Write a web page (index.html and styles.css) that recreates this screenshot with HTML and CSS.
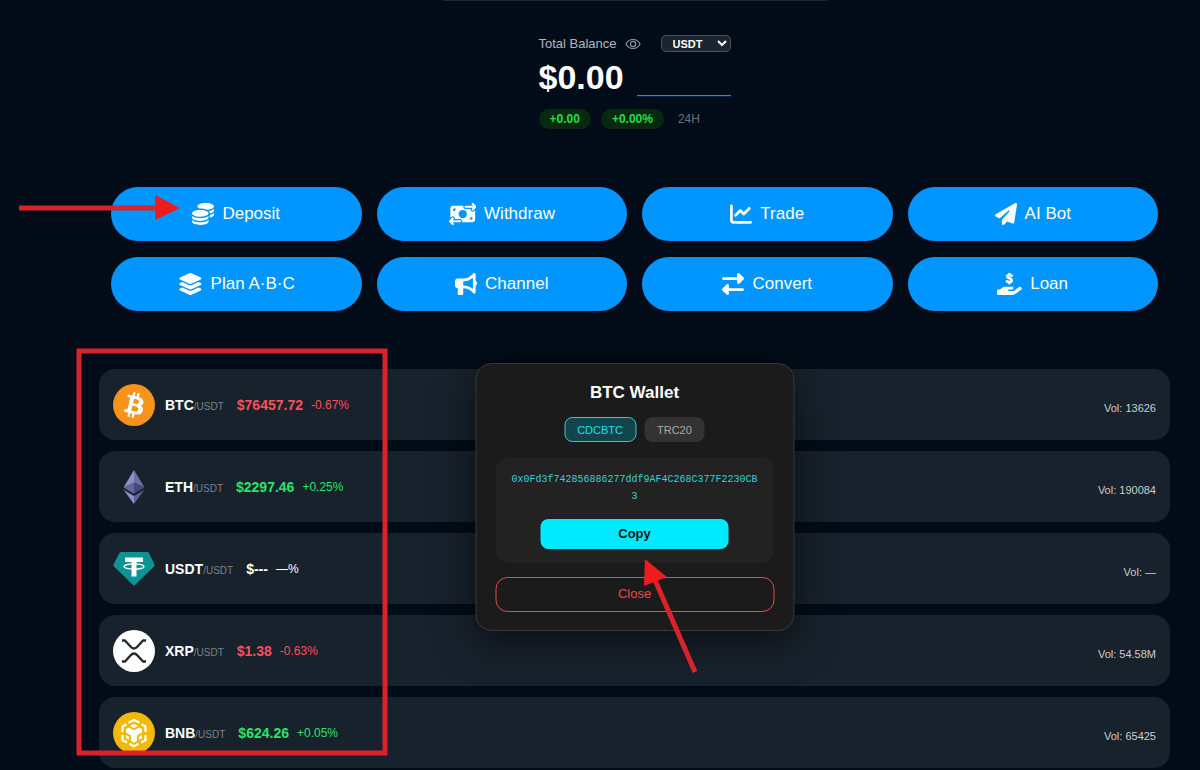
FILE: index.html
```html
<!DOCTYPE html>
<html lang="en">
    <head>
        <meta charset="utf-8">
        <title>Wallet</title>
        <link rel="stylesheet" href="styles.css">
    </head>
    <body>
        <main>
            <div class="topbar"></div>
            <section class="balance">
                <div class="balance-head">
                    <label for="currency">Total Balance</label>
                    <button class="eye" aria-label="Hide balance">
                        <svg viewBox="0 0 16 12"><path d="M1 6C4 0 12 0 15 6C12 12 4 12 1 6Z"/><circle cx="8" cy="6" r="2.6"/></svg>
                    </button>
                    <select id="currency">
                        <option>USDT</option>
                        <option>BTC</option>
                    </select>
                </div>
                <div class="balance-sum">
                    <strong>$0.00</strong>
                    <div class="spark"></div>
                </div>
                <div class="balance-change">
                    <span class="pill">+0.00</span>
                    <span class="pill">+0.00%</span>
                    <span class="period">24H</span>
                </div>
            </section>

            <nav class="actions">
                <button>
                    <svg viewBox="0 0 512 512"><path d="M512 80c0 18-14.3 34.6-38.4 48c-29.1 16.1-72.5 27.5-122.3 30.9c-3.7-1.8-7.4-3.5-11.3-5C300.6 137.4 248.2 128 192 128c-8.3 0-16.4 .2-24.5 .6l-1.1-.6C142.3 114.6 128 98 128 80c0-44.2 86-80 192-80S512 35.8 512 80zM160.7 161.1c10.2-.7 20.7-1.1 31.3-1.1c62.2 0 117.4 12.3 152.5 31.4C369.3 204.9 384 221.7 384 240c0 4-.7 7.9-2.1 11.7c-4.6 13.2-17 25.3-35 35.5c-.4 .2-.9 .5-1.3 .7c-35 19.4-90.8 32-153.6 32c-59.6 0-112.9-11.3-148.2-29.1c-1.9-.9-3.7-1.9-5.5-2.9C14.3 274.6 0 258 0 240c0-34.8 53.4-64.5 128-75.4c10.5-1.5 21.4-2.7 32.7-3.5zM416 240c0-21.9-10.6-39.9-24.1-53.4c28.3-4.4 54.2-11.4 76.2-20.5c16.3-6.8 31.5-15.2 43.9-25.5V176c0 19.3-16.5 37.1-43.8 50.9c-14.6 7.4-32.4 13.7-52.4 18.5c.1-1.8 .2-3.5 .2-5.3zm-32 96c0 18-14.3 34.6-38.4 48c-1.8 1-3.6 1.9-5.5 2.9C304.9 404.7 251.6 416 192 416c-62.8 0-118.6-12.6-153.6-32C14.3 370.6 0 354 0 336V300.6c12.5 10.3 27.6 18.7 43.9 25.5C83.4 342.6 135.8 352 192 352s108.6-9.4 148.1-25.9c7.8-3.2 15.3-6.9 22.4-10.9c6.1-3.4 11.8-7.2 17.2-11.2c1.5-1.1 2.9-2.3 4.3-3.4V336zm32 0V278.1c19-4.2 36.5-9.5 52.1-16c16.3-6.8 31.5-15.2 43.9-25.5V272c0 10.5-5 21-14.9 30.9c-16.3 16.3-45 29.7-81.3 38.4c.1-1.7 .2-3.5 .2-5.3zM192 448c56.2 0 108.6-9.4 148.1-25.9c16.3-6.8 31.5-15.2 43.9-25.5V432c0 44.2-86 80-192 80S0 476.2 0 432V396.6c12.5 10.3 27.6 18.7 43.9 25.5C83.4 438.6 135.8 448 192 448z"/></svg>
                    Deposit
                </button>
                <button>
                    <svg viewBox="0 0 640 512"><path d="M535 41c-9.4-9.4-9.4-24.6 0-33.9s24.6-9.4 33.9 0l64 64c4.5 4.5 7 10.6 7 17s-2.5 12.5-7 17l-64 64c-9.4 9.4-24.6 9.4-33.9 0s-9.4-24.6 0-33.9l23-23L384 112c-13.3 0-24-10.7-24-24s10.7-24 24-24l174.1 0L535 41zM105 377l-23 23L256 400c13.3 0 24 10.7 24 24s-10.7 24-24 24L81.9 448l23 23c9.4 9.4 9.4 24.6 0 33.9s-24.6 9.4-33.9 0L7 441c-4.5-4.5-7-10.6-7-17s2.5-12.5 7-17l64-64c9.4-9.4 24.6-9.4 33.9 0s9.4 24.6 0 33.9zM96 64H337.9c-3.7 7.2-5.9 15.3-5.9 24c0 28.7 23.3 52 52 52l117.4 0c-4 17 .6 35.5 13.8 48.8c20.3 20.3 53.2 20.3 73.5 0L608 169.5V384c0 35.3-28.7 64-64 64H302.1c3.7-7.2 5.9-15.3 5.9-24c0-28.7-23.3-52-52-52l-117.4 0c4-17-.6-35.5-13.8-48.8c-20.3-20.3-53.2-20.3-73.5 0L32 342.5V128c0-35.3 28.7-64 64-64zm64 64H96v64c35.3 0 64-28.7 64-64zM544 320c-35.3 0-64 28.7-64 64h64V320zM320 352a96 96 0 1 0 0-192 96 96 0 1 0 0 192z"/></svg>
                    Withdraw
                </button>
                <button>
                    <svg viewBox="0 0 512 512"><path d="M64 64c0-17.7-14.3-32-32-32S0 46.3 0 64V400c0 44.2 35.8 80 80 80H480c17.7 0 32-14.3 32-32s-14.3-32-32-32H80c-8.8 0-16-7.2-16-16V64zm406.6 86.6c12.5-12.5 12.5-32.8 0-45.3s-32.8-12.5-45.3 0L320 210.7l-57.4-57.4c-12.5-12.5-32.8-12.5-45.3 0l-112 112c-12.5 12.5-12.5 32.8 0 45.3s32.8 12.5 45.3 0L240 221.3l57.4 57.4c12.5 12.5 32.8 12.5 45.3 0l128-128z"/></svg>
                    Trade
                </button>
                <button>
                    <svg viewBox="0 0 512 512"><path d="M498.1 5.6c10.1 7 15.4 19.1 13.5 31.2l-64 416c-1.5 9.7-7.4 18.2-16 23s-18.9 5.4-28 1.6L284 427.7l-68.5 74.1c-8.9 9.7-22.9 12.9-35.2 8.1S160 493.2 160 480V396.4c0-4 1.5-7.8 4.2-10.7L331.8 202.8c5.8-6.3 5.6-16-.4-22s-15.7-6.4-22-.7L106 360.8 17.7 316.6C7.1 311.3 .3 300.7 0 288.9s5.9-22.8 16.1-28.7l448-256c10.7-6.1 23.9-5.5 34 1.4z"/></svg>
                    AI Bot
                </button>
                <button>
                    <svg viewBox="0 0 576 512"><path d="M264.5 5.2c14.9-6.9 32.1-6.9 47 0l218.6 101c8.5 3.9 13.9 12.4 13.9 21.8s-5.4 17.9-13.9 21.8l-218.6 101c-14.9 6.9-32.1 6.9-47 0L45.9 149.8C37.4 145.8 32 137.3 32 128s5.4-17.9 13.9-21.8L264.5 5.2zM476.9 209.6l53.2 24.6c8.5 3.9 13.9 12.4 13.9 21.8s-5.4 17.9-13.9 21.8l-218.6 101c-14.9 6.9-32.1 6.9-47 0L45.9 277.8C37.4 273.8 32 265.3 32 256s5.4-17.9 13.9-21.8l53.2-24.6 152 70.2c23.4 10.8 50.4 10.8 73.8 0l152-70.2zm-152 198.2l152-70.2 53.2 24.6c8.5 3.9 13.9 12.4 13.9 21.8s-5.4 17.9-13.9 21.8l-218.6 101c-14.9 6.9-32.1 6.9-47 0L45.9 405.8C37.4 401.8 32 393.3 32 384s5.4-17.9 13.9-21.8l53.2-24.6 152 70.2c23.4 10.8 50.4 10.8 73.8 0z"/></svg>
                    Plan A·B·C
                </button>
                <button>
                    <svg viewBox="0 0 512 512"><path d="M480 32c0-12.9-7.8-24.6-19.8-29.6s-25.7-2.2-34.9 6.9L381.7 53c-48 48-113.1 75-181 75H192 160 64c-35.3 0-64 28.7-64 64v96c0 35.3 28.7 64 64 64l0 128c0 17.7 14.3 32 32 32h64c17.7 0 32-14.3 32-32V352l8.7 0c67.9 0 133 27 181 75l43.6 43.6c9.2 9.2 22.9 11.9 34.9 6.9s19.8-16.6 19.8-29.6V300.4c18.6-8.8 32-32.5 32-60.4s-13.4-51.6-32-60.4V32zm-64 76.7V240 371.3C357.2 317.8 280.5 288 200.7 288H192V192h8.7c79.8 0 156.5-29.8 215.3-83.3z"/></svg>
                    Channel
                </button>
                <button>
                    <svg viewBox="0 0 512 512"><path d="M32 96l320 0V32c0-12.9 7.8-24.6 19.8-29.6s25.7-2.2 34.9 6.9l96 96c6 6 9.4 14.1 9.4 22.6s-3.4 16.6-9.4 22.6l-96 96c-9.2 9.2-22.9 11.9-34.9 6.9s-19.8-16.6-19.8-29.6V160L32 160c-17.7 0-32-14.3-32-32s14.3-32 32-32zM480 352c17.7 0 32 14.3 32 32s-14.3 32-32 32H160v64c0 12.9-7.8 24.6-19.8 29.6s-25.7 2.2-34.9-6.9l-96-96c-6-6-9.4-14.1-9.4-22.6s3.4-16.6 9.4-22.6l96-96c9.2-9.2 22.9-11.9 34.9-6.9s19.8 16.6 19.8 29.6l0 64H480z"/></svg>
                    Convert
                </button>
                <button>
                    <svg viewBox="0 0 576 512"><path d="M568.2 336.3c13.1 17.8 9.3 42.8-8.5 55.9L433.1 485.5c-23.4 17.2-51.6 26.5-80.7 26.5H32c-17.7 0-32-14.3-32-32V416c0-17.7 14.3-32 32-32H68.8l44.9-36c22.7-18.2 50.9-28 80-28H352c17.7 0 32 14.3 32 32s-14.3 32-32 32H272c-8.8 0-16 7.2-16 16s7.2 16 16 16H392.6l119.7-88.2c17.8-13.1 42.8-9.3 55.9 8.5z"/><path class="coin-line" d="M288 18V45M288 211V238M341 62C317 50 297 45 283 46C251 47 235 61 236 81C238 107 267 115 289 122C319 131 341 144 341 171C340 196 319 210 289 211C267 211 245 204 231 195"/></svg>
                    Loan
                </button>
            </nav>

            <ul class="markets">
                <li class="down">
                    <svg viewBox="0 0 42 42"><circle cx="21" cy="21" r="21" fill="#f7931a"/><path transform="scale(1.3125)" fill="#fff" d="M23.189 14.02c.314-2.096-1.283-3.223-3.465-3.975l.708-2.84-1.728-.43-.69 2.765c-.454-.114-.92-.22-1.385-.326l.695-2.783L15.596 6l-.708 2.839c-.376-.086-.746-.17-1.104-.26l.002-.009-2.384-.595-.46 1.846s1.283.294 1.256.312c.7.175.826.638.805 1.006l-.806 3.235c.048.012.11.03.18.057l-.183-.045-1.13 4.532c-.086.212-.303.531-.793.41.018.025-1.256-.313-1.256-.313l-.858 1.978 2.25.561c.418.105.828.215 1.231.318l-.715 2.872 1.727.43.708-2.84c.472.127.93.245 1.378.357l-.706 2.828 1.728.43.715-2.866c2.948.558 5.164.333 6.097-2.333.752-2.146-.037-3.385-1.588-4.192 1.13-.26 1.98-1.003 2.207-2.538zm-3.95 5.538c-.533 2.147-4.148.986-5.32.695l.95-3.805c1.172.293 4.929.872 4.37 3.11zm.535-5.569c-.487 1.953-3.495.96-4.47.717l.86-3.45c.975.243 4.118.696 3.61 2.733z"/></svg>
                    <div class="pair"><b>BTC</b><small>/USDT</small></div>
                    <b class="price">$76457.72</b>
                    <span class="change">-0.67%</span>
                    <span class="vol">Vol: 13626</span>
                </li>
                <li class="up">
                    <svg viewBox="0 0 42 42"><path fill="#8a92c4" d="M21 4L10.500 21.500L21 16.700Z"/><path fill="#6a70a8" d="M21 4L31.500 21.500L21 16.700Z"/><path fill="#62689d" d="M10.500 21.500L21 16.700V27.800Z"/><path fill="#454a78" d="M31.500 21.500L21 16.700V27.800Z"/><path fill="#8a92c4" d="M10.500 23.700L21 30V38Z"/><path fill="#5c6298" d="M31.500 23.700L21 30V38Z"/></svg>
                    <div class="pair"><b>ETH</b><small>/USDT</small></div>
                    <b class="price">$2297.46</b>
                    <span class="change">+0.25%</span>
                    <span class="vol">Vol: 190084</span>
                </li>
                <li>
                    <svg viewBox="0 0 42 42"><path fill="#0c9393" d="M8 4H34Q35 4 36 5L41.500 16.500Q42 17.500 41 18.500L22 37Q21 38 20 37L1 18.500Q0 17.500 .5 16.500L6.500 5Q7 4 8 4Z"/><path fill="#fff" d="M12 9.500H30V14H23.500V28.500H18.500V14H12Z"/><ellipse cx="21" cy="18.500" rx="10" ry="2.700" fill="none" stroke="#fff" stroke-width="1.300"/></svg>
                    <div class="pair"><b>USDT</b><small>/USDT</small></div>
                    <b class="price">$---</b>
                    <span class="change">—%</span>
                    <span class="vol">Vol: —</span>
                </li>
                <li class="down">
                    <svg viewBox="0 0 42 42"><circle cx="21" cy="21" r="21" fill="#fff"/><path fill="none" stroke="#23292f" stroke-width="2.400" stroke-linejoin="round" d="M9 10.500H12L17.500 16.500Q21 20.500 24.500 16.500L30 10.500H33M9 31.500H12L17.500 25.500Q21 21.500 24.500 25.500L30 31.500H33"/></svg>
                    <div class="pair"><b>XRP</b><small>/USDT</small></div>
                    <b class="price">$1.38</b>
                    <span class="change">-0.63%</span>
                    <span class="vol">Vol: 54.58M</span>
                </li>
                <li class="up">
                    <svg viewBox="0 0 42 42"><circle cx="21" cy="21" r="21" fill="#f0b90b"/><g fill="none" stroke="#fff" stroke-width="2.200"><path d="M15.500 10.800L21 8L26.500 10.800M13.500 12.300L9.500 14.500V20M28.500 12.300L32.500 14.500V20M9.500 23V28L14 30.600M32.500 23V28L28 30.600M16.500 31.800L21 34.200L25.500 31.800"/></g><path fill="#fff" d="M17 14L21 11.700L25 14L21 16.300ZM13 17L16 15.500L21 18.400L26 15.500L29 17V20.500L24 23.400V29L21 30.700L18 29V23.400L13 20.500ZM13 23L16 24.700V28L13 26.300ZM29 23L26 24.700V28L29 26.300Z"/></svg>
                    <div class="pair"><b>BNB</b><small>/USDT</small></div>
                    <b class="price">$624.26</b>
                    <span class="change">+0.05%</span>
                    <span class="vol">Vol: 65425</span>
                </li>
            </ul>

            <div class="modal" role="dialog" aria-labelledby="wallet-title">
                <h2 id="wallet-title">BTC Wallet</h2>
                <div class="tabs">
                    <button class="active">CDCBTC</button>
                    <button>TRC20</button>
                </div>
                <div class="address">
                    <code>0x0Fd3f742856886277ddf9AF4C268C377F2230CB3</code>
                    <button class="copy">Copy</button>
                </div>
                <button class="close">Close</button>
            </div>
        </main>

        <!-- guide marks over the page -->
        <svg class="marks" width="1200" height="770">
            <path class="line" d="M19 208H158"/>
            <path class="head" d="M155 195L180 208L155 220Z"/>
            <rect class="line" x="79" y="351" width="306" height="402"/>
            <path class="line" d="M695 672L655 580"/>
            <path class="head" d="M645 559L667 577L644 586Z"/>
        </svg>
    </body>
</html>
```
FILE: styles.css
```css
*{
    box-sizing: border-box;
}
body{
    margin: 0;
    min-height: 100vh;
    background: #020c18;
    color: #fff;
    font-family: "Liberation Sans", Arial, sans-serif;
    position: relative;
}
button, select{
    font-family: inherit;
    color: inherit;
}
main{
    position: relative;
    margin-left: 69px;
    padding: 0 30px;
}
.topbar{
    width: 384px;
    height: 1px;
    margin: 0 auto;
    background: #1d2731;
}
.balance{
    width: 192px;
    margin: 34px auto 0;
}
.balance-head{
    display: flex;
    align-items: center;
    height: 17px;
    font-size: 13px;
    color: #b3b8bf;
}
.eye{
    display: flex;
    margin-left: 8px;
    padding: 0;
    border: 0;
    background: none;
    color: #9299a1;
}
.eye svg{
    width: 16px;
    height: 12px;
    fill: none;
    stroke: currentColor;
    stroke-width: 1.2;
}
#currency{
    width: 70px;
    height: 17px;
    margin-left: auto;
    padding: 0 0 0 7px;
    border: 1px solid #4b525b;
    border-radius: 5px;
    background: #1c2430;
    color: #fff;
    font-size: 11px;
    font-weight: bold;
}
.balance-sum{
    display: flex;
    justify-content: space-between;
    align-items: flex-end;
    height: 45px;
}
.balance-sum strong{
    font-size: 34px;
    line-height: 40px;
}
.spark{
    width: 94px;
    height: 2px;
    border-top: 1px solid #4a7fc4;
    background: #04204a;
}
.balance-change{
    display: flex;
    align-items: center;
    gap: 10px;
    margin-top: 12px;
    font-size: 12px;
    line-height: 20px;
}
.pill{
    padding: 0 11px;
    border-radius: 10px;
    background: #06290f;
    color: #22e03c;
    font-weight: bold;
}
.period{
    margin-left: 4px;
    color: #6b7077;
}
.actions{
    display: grid;
    grid-template-columns: repeat(4, 1fr);
    gap: 16px 15px;
    margin-top: 58px;
    padding: 0 12px;
}
.actions button{
    display: flex;
    align-items: center;
    justify-content: center;
    gap: 8px;
    height: 54px;
    border: 0;
    border-radius: 27px;
    background: #0095ff;
    font-size: 17px;
}
.actions svg{
    height: 22px;
    fill: #fff;
}
.actions .coin-line{
    fill: none;
    stroke: #fff;
    stroke-width: 58;
    stroke-linecap: round;
}
.markets{
    display: grid;
    gap: 11px;
    margin: 58px 0 0;
    padding: 0;
    list-style: none;
}
.markets li{
    display: flex;
    align-items: center;
    height: 71px;
    padding: 0 14px;
    border-radius: 16px;
    background: #18222c;
    font-size: 14px;
}
.markets svg{
    width: 42px;
    height: 42px;
    margin-right: 10px;
}
.pair small{
    font-size: 10px;
    color: #7c838b;
}
.price{
    margin: 0 8px 0 13px;
}
.change{
    font-size: 12px;
}
.down .price, .down .change{
    color: #ff4d5a;
}
.up .price, .up .change{
    color: #2be36b;
}
.vol{
    margin-left: auto;
    padding-top: 6px;
    font-size: 11px;
    color: #ccc;
}
.modal{
    position: absolute;
    top: 363px;
    left: 50%;
    transform: translateX(-50%);
    width: 319px;
    padding: 18px 19px;
    border: 1px solid #383838;
    border-radius: 16px;
    background: #1b1b1b;
    box-shadow: 0 10px 40px rgba(0, 0, 0, 0.6);
    text-align: center;
}
.modal h2{
    margin: 0;
    font-size: 17px;
    line-height: 22px;
}
.tabs{
    display: flex;
    justify-content: center;
    gap: 8px;
    margin: 13px 0 15px;
}
.tabs button{
    height: 25px;
    padding: 0 12px;
    border: 1px solid #333;
    border-radius: 8px;
    background: #333;
    color: #aaa;
    font-size: 11px;
}
.tabs .active{
    border-color: #3cc8d0;
    background: #12454a;
    color: #1fe0ea;
}
.address{
    padding: 14px 16px;
    border-radius: 14px;
    background: #222;
}
.address code{
    display: block;
    font-family: "Liberation Mono", monospace;
    font-size: 10px;
    line-height: 17px;
    color: #35d3d3;
    word-break: break-all;
}
.copy{
    width: 76%;
    height: 30px;
    margin-top: 14px;
    padding: 0 0 2px;
    border: 0;
    border-radius: 8px;
    background: #00eaff;
    color: #111;
    font-size: 13px;
    font-weight: bold;
}
.modal .close{
    width: 100%;
    height: 35px;
    margin-top: 14px;
    padding: 0 0 2px;
    border: 1px solid #e84a4a;
    border-radius: 12px;
    background: none;
    color: #e84a4a;
    font-size: 13px;
}
.marks{
    position: absolute;
    top: 0;
    left: 0;
    pointer-events: none;
}
.marks .line{
    fill: none;
    stroke: #d9232a;
    stroke-width: 5;
}
.marks .head{
    fill: #ee1c1c;
}
```
